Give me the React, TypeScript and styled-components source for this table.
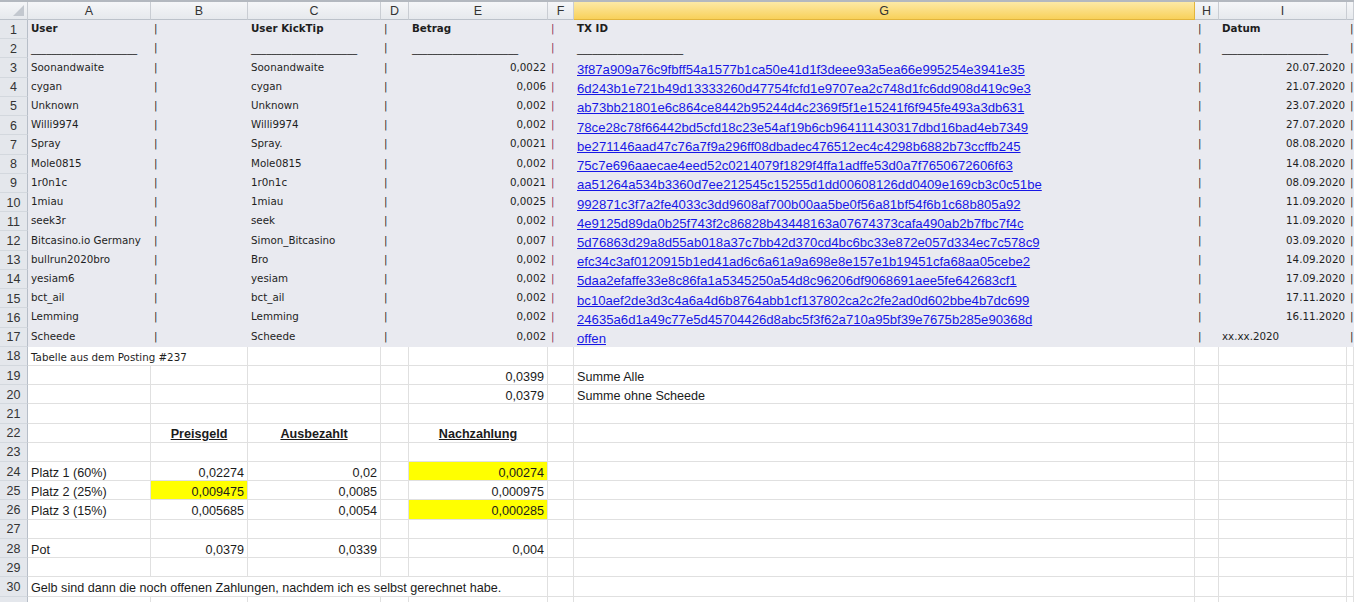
import React from "react";
import styled, { createGlobalStyle, css } from "styled-components";

const GRID = "28px 123px 97px 133px 28px 139px 26px 621px 24px 128px 1fr";
const ROW_H = 19.23;

const Global = createGlobalStyle`
  html, body { margin: 0; padding: 0; background: #fff; }
  body { width: 1354px; height: 602px; overflow: hidden; }
`;

const Sheet = styled.div`
  width: 1354px;
  height: 602px;
  overflow: hidden;
  display: flex;
  flex-direction: column;
  background: #fff;
`;

const HeaderRow = styled.div`
  display: grid;
  grid-template-columns: ${GRID};
  height: 20px;
  flex: none;
  box-sizing: border-box;
  border-top: 2px solid #b3b8bf;
`;

const ColHead = styled.div<{ $active?: boolean }>`
  display: flex;
  align-items: center;
  justify-content: center;
  box-sizing: border-box;
  font-family: "Liberation Sans", Arial, sans-serif;
  font-size: 12.5px;
  color: #333;
  background: ${(p) =>
    p.$active ? "linear-gradient(#fce9a6, #f8d15a)" : "linear-gradient(#f5f6f8, #e6e9ed)"};
  border-right: 1px solid ${(p) => (p.$active ? "#e2b53c" : "#c9cdd3")};
  border-bottom: 1px solid ${(p) => (p.$active ? "#e2b53c" : "#bcc2ca")};
`;

const Corner = styled(ColHead)`
  justify-content: flex-end;
  align-items: flex-end;
  padding: 0 3px 3px 0;
`;

const Row = styled.div<{ $band?: boolean }>`
  display: grid;
  grid-template-columns: ${GRID};
  height: ${ROW_H}px;
  flex: none;
  background: ${(p) => (p.$band ? "#e9eaf0" : "#fff")};
`;

const RowHead = styled.div`
  display: flex;
  align-items: center;
  justify-content: center;
  box-sizing: border-box;
  padding-top: 1px;
  background: #e4e7ec;
  border-right: 1px solid #b7bec8;
  border-bottom: 1px solid #d3d8de;
  font-family: "Liberation Sans", Arial, sans-serif;
  font-size: 12.5px;
  color: #333;
`;

type Kind = "tahoma" | "calibri" | "link";

const Cell = styled.div<{
  $band?: boolean;
  $align?: "left" | "right" | "center";
  $kind?: Kind;
  $bold?: boolean;
  $under?: boolean;
  $fill?: string;
  $span?: number;
}>`
  box-sizing: border-box;
  min-width: 0;
  display: flex;
  align-items: center;
  justify-content: ${(p) =>
    p.$align === "right" ? "flex-end" : p.$align === "center" ? "center" : "flex-start"};
  padding: 0 3px;
  white-space: nowrap;
  overflow: visible;
  grid-column: span ${(p) => p.$span ?? 1};
  background: ${(p) => p.$fill ?? "transparent"};
  ${(p) =>
    !p.$band &&
    css`
      border-right: 1px solid #e0e0e0;
      border-bottom: 1px solid #e0e0e0;
    `}
  ${(p) =>
    p.$kind === "calibri"
      ? css`
          font-family: "Liberation Sans", Arial, sans-serif;
          font-size: 12.6px;
          color: #1b1b1b;
          padding-top: 3px;
        `
      : p.$kind === "link"
      ? css`
          font-family: "Liberation Sans", Arial, sans-serif;
          font-size: 13.15px;
          padding-top: 3px;
        `
      : css`
          font-family: "DejaVu Sans", Verdana, sans-serif;
          font-size: 10.3px;
          color: #1e1e1e;
          ${p.$band ? "padding-bottom: 3px;" : "padding-top: 3px;"}
        `}
  ${(p) => p.$band && p.$align === "right" && "padding-right: 2px;"}
  font-weight: ${(p) => (p.$bold ? 700 : 400)};
  text-decoration: ${(p) => (p.$under ? "underline" : "none")};
`;

const Link = styled.a`
  color: #1717e6;
  text-decoration: underline;
  cursor: pointer;
`;

const Pipe = styled.span<{ $tone?: "dark" | "wine" }>`
  font-family: "DejaVu Sans", Verdana, sans-serif;
  font-size: 10.3px;
  color: ${(p) => (p.$tone === "wine" ? "#8b2f55" : "#262626")};
`;

const Rule = styled.span`
  font-family: "DejaVu Sans", Verdana, sans-serif;
  font-size: 10.3px;
  color: #222;
  letter-spacing: -0.1px;
  position: relative;
  top: 1px;
`;

type RowData = {
  a: string;
  c: string;
  e: string;
  g: string;
  i: string;
  iLeft?: boolean;
};

const DATA: RowData[] = [
  { a: "Soonandwaite", c: "Soonandwaite", e: "0,0022", g: "3f87a909a76c9fbff54a1577b1ca50e41d1f3deee93a5ea66e995254e3941e35", i: "20.07.2020" },
  { a: "cygan", c: "cygan", e: "0,006", g: "6d243b1e721b49d13333260d47754fcfd1e9707ea2c748d1fc6dd908d419c9e3", i: "21.07.2020" },
  { a: "Unknown", c: "Unknown", e: "0,002", g: "ab73bb21801e6c864ce8442b95244d4c2369f5f1e15241f6f945fe493a3db631", i: "23.07.2020" },
  { a: "Willi9974", c: "Willi9974", e: "0,002", g: "78ce28c78f66442bd5cfd18c23e54af19b6cb964111430317dbd16bad4eb7349", i: "27.07.2020" },
  { a: "Spray", c: "Spray.", e: "0,0021", g: "be271146aad47c76a7f9a296ff08dbadec476512ec4c4298b6882b73ccffb245", i: "08.08.2020" },
  { a: "Mole0815", c: "Mole0815", e: "0,002", g: "75c7e696aaecae4eed52c0214079f1829f4ffa1adffe53d0a7f7650672606f63", i: "14.08.2020" },
  { a: "1r0n1c", c: "1r0n1c", e: "0,0021", g: "aa51264a534b3360d7ee212545c15255d1dd00608126dd0409e169cb3c0c51be", i: "08.09.2020" },
  { a: "1miau", c: "1miau", e: "0,0025", g: "992871c3f7a2fe4033c3dd9608af700b00aa5be0f56a81bf54f6b1c68b805a92", i: "11.09.2020" },
  { a: "seek3r", c: "seek", e: "0,002", g: "4e9125d89da0b25f743f2c86828b43448163a07674373cafa490ab2b7fbc7f4c", i: "11.09.2020" },
  { a: "Bitcasino.io Germany", c: "Simon_Bitcasino", e: "0,007", g: "5d76863d29a8d55ab018a37c7bb42d370cd4bc6bc33e872e057d334ec7c578c9", i: "03.09.2020" },
  { a: "bullrun2020bro", c: "Bro", e: "0,002", g: "efc34c3af0120915b1ed41ad6c6a61a9a698e8e157e1b19451cfa68aa05cebe2", i: "14.09.2020" },
  { a: "yesiam6", c: "yesiam", e: "0,002", g: "5daa2efaffe33e8c86fa1a5345250a54d8c96206df9068691aee5fe642683cf1", i: "17.09.2020" },
  { a: "bct_ail", c: "bct_ail", e: "0,002", g: "bc10aef2de3d3c4a6a4d6b8764abb1cf137802ca2c2fe2ad0d602bbe4b7dc699", i: "17.11.2020" },
  { a: "Lemming", c: "Lemming", e: "0,002", g: "24635a6d1a49c77e5d45704426d8abc5f3f62a710a95bf39e7675b285e90368d", i: "16.11.2020" },
  { a: "Scheede", c: "Scheede", e: "0,002", g: "offen", i: "xx.xx.2020", iLeft: true },
];

const LETTERS = ["A", "B", "C", "D", "E", "F", "G", "H", "I", ""];
const UNDERSCORES = "_____________________";

type LowCell = {
  t?: string;
  span?: number;
  align?: "left" | "right" | "center";
  kind?: Kind;
  bold?: boolean;
  under?: boolean;
  fill?: string;
};

const YELLOW = "#ffff00";
const E: LowCell = {};

const num = (t: string, fill?: string): LowCell => ({ t, align: "right", kind: "calibri", fill });
const txt = (t: string): LowCell => ({ t, kind: "calibri" });
const head = (t: string): LowCell => ({ t, align: "center", kind: "calibri", bold: true, under: true });
const blank = (): LowCell[] => [E, E, E, E, E, E, E, E, E, E];

const LOWER: LowCell[][] = [
  [{ t: "Tabelle aus dem Posting #237", span: 2, kind: "tahoma" }, E, E, E, E, E, E, E, E],
  [E, E, E, E, num("0,0399"), E, txt("Summe Alle"), E, E, E],
  [E, E, E, E, num("0,0379"), E, txt("Summe ohne Scheede"), E, E, E],
  blank(),
  [E, head("Preisgeld"), head("Ausbezahlt"), E, head("Nachzahlung"), E, E, E, E, E],
  blank(),
  [txt("Platz 1 (60%)"), num("0,02274"), num("0,02"), E, num("0,00274", YELLOW), E, E, E, E, E],
  [txt("Platz 2 (25%)"), num("0,009475", YELLOW), num("0,0085"), E, num("0,000975"), E, E, E, E, E],
  [txt("Platz 3 (15%)"), num("0,005685"), num("0,0054"), E, num("0,000285", YELLOW), E, E, E, E, E],
  blank(),
  [txt("Pot"), num("0,0379"), num("0,0339"), E, num("0,004"), E, E, E, E, E],
  blank(),
  [
    { t: "Gelb sind dann die noch offenen Zahlungen, nachdem ich es selbst gerechnet habe.", span: 5, kind: "calibri" },
    E,
    E,
    E,
    E,
    E,
  ],
  blank(),
];

const CornerMark = () => (
  <svg width="11" height="11" viewBox="0 0 11 11">
    <polygon points="11,0 11,11 0,11" fill="#c3c8cf" />
  </svg>
);

const BandRow: React.FC<{ n: number; children: React.ReactNode }> = ({ n, children }) => (
  <Row $band>
    <RowHead>{n}</RowHead>
    {children}
  </Row>
);

export default function App() {
  return (
    <>
      <Global />
      <Sheet>
        <HeaderRow>
          <Corner>
            <CornerMark />
          </Corner>
          {LETTERS.map((l, i) => (
            <ColHead key={i} $active={l === "G"}>
              {l}
            </ColHead>
          ))}
        </HeaderRow>

        <BandRow n={1}>
          <Cell $band $bold>User</Cell>
          <Cell $band><Pipe>|</Pipe></Cell>
          <Cell $band $bold>User KickTip</Cell>
          <Cell $band><Pipe>|</Pipe></Cell>
          <Cell $band $bold>Betrag</Cell>
          <Cell $band><Pipe $tone="wine">|</Pipe></Cell>
          <Cell $band $bold>TX ID</Cell>
          <Cell $band><Pipe>|</Pipe></Cell>
          <Cell $band $bold>Datum</Cell>
          <Cell $band><Pipe>|</Pipe></Cell>
        </BandRow>

        <BandRow n={2}>
          <Cell $band><Rule>{UNDERSCORES}</Rule></Cell>
          <Cell $band><Pipe>|</Pipe></Cell>
          <Cell $band><Rule>{UNDERSCORES}</Rule></Cell>
          <Cell $band><Pipe>|</Pipe></Cell>
          <Cell $band><Rule>{UNDERSCORES}</Rule></Cell>
          <Cell $band><Pipe $tone="wine">|</Pipe></Cell>
          <Cell $band><Rule>{UNDERSCORES}</Rule></Cell>
          <Cell $band><Pipe>|</Pipe></Cell>
          <Cell $band><Rule>{UNDERSCORES}</Rule></Cell>
          <Cell $band><Pipe>|</Pipe></Cell>
        </BandRow>

        {DATA.map((d, idx) => (
          <BandRow key={idx} n={idx + 3}>
            <Cell $band>{d.a}</Cell>
            <Cell $band><Pipe>|</Pipe></Cell>
            <Cell $band>{d.c}</Cell>
            <Cell $band><Pipe>|</Pipe></Cell>
            <Cell $band $align="right">{d.e}</Cell>
            <Cell $band><Pipe $tone="wine">|</Pipe></Cell>
            <Cell $band $kind="link"><Link>{d.g}</Link></Cell>
            <Cell $band><Pipe>|</Pipe></Cell>
            <Cell $band $align={d.iLeft ? "left" : "right"}>{d.i}</Cell>
            <Cell $band><Pipe>|</Pipe></Cell>
          </BandRow>
        ))}

        {LOWER.map((cells, r) => (
          <Row key={r}>
            <RowHead>{r + 18 <= 30 ? r + 18 : ""}</RowHead>
            {cells.map((c, i) => (
              <Cell
                key={i}
                $span={c.span}
                $align={c.align}
                $kind={c.kind ?? "calibri"}
                $bold={c.bold}
                $under={c.under}
                $fill={c.fill}
              >
                {c.t}
              </Cell>
            ))}
          </Row>
        ))}
      </Sheet>
    </>
  );
}
